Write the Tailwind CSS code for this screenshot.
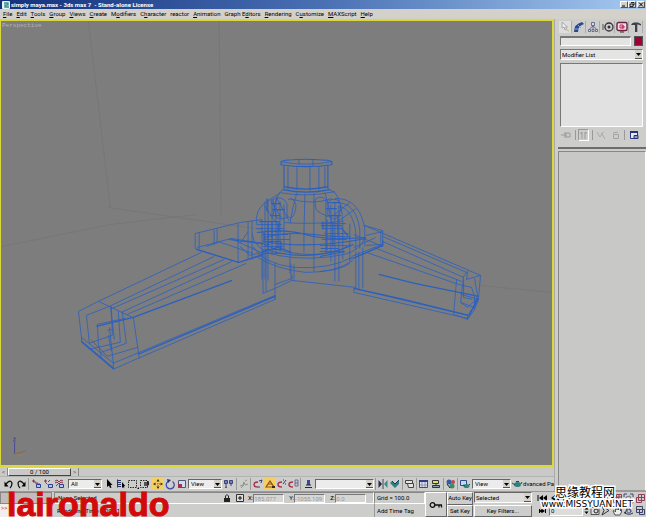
<!DOCTYPE html>
<html lang="en">
<head>
    <meta charset="UTF-8">
    <meta name="viewport" content="width=device-width, initial-scale=1.0">
    <title>simply maya.max - 3ds max 7 - Stand-alone License</title>
    <script src="https://cdn.jsdelivr.net/npm/@tailwindcss/browser@4"></script>
</head>
<body class="h-screen flex flex-col overflow-hidden bg-[#cdcdcb] text-black font-['Roboto','Liberation_Sans',sans-serif] text-[6px] leading-[8px]">

    <!-- Title bar -->
    <header class="h-[9px] shrink-0 flex items-center gap-px pl-[2px] pr-px bg-linear-to-r from-[#14307c] via-[#4a70b4] to-[#a6caf0] text-white">
        <svg class="size-2" viewBox="0 0 8 8"><rect width="8" height="8" rx="1" fill="#e8f4f4"/><path d="M2 2h4v2H3v2h4" fill="none" stroke="#2b8d94" stroke-width="1.3"/></svg>
        <h1 class="font-bold">simply maya.max - 3ds max 7 &nbsp;- Stand-alone License</h1>
        <div class="ml-auto flex text-black">
            <button aria-label="Minimize" class="w-2 h-[7px] bg-[#d4d0c8] border border-t-white border-l-white border-r-[#555] border-b-[#555]"><svg class="w-full h-full" viewBox="0 0 6 5"><path d="M1 4h3" stroke="#000"/></svg></button>
            <button aria-label="Restore" class="w-2 h-[7px] bg-[#d4d0c8] border border-t-white border-l-white border-r-[#555] border-b-[#555]"><svg class="w-full h-full" viewBox="0 0 6 5"><path d="M2 .5h3v2.500h-1M1 2h3v2.500h-3z" fill="none" stroke="#000" stroke-width=".8"/></svg></button>
            <button aria-label="Close" class="w-2 h-[7px] ml-px bg-[#d4d0c8] border border-t-white border-l-white border-r-[#555] border-b-[#555]"><svg class="w-full h-full" viewBox="0 0 6 5"><path d="M1 .5l4 4M5 .5l-4 4" stroke="#000"/></svg></button>
        </div>
    </header>

    <!-- Menu -->
    <nav class="h-[10px] shrink-0 flex items-center gap-1 pl-[3px] bg-[#d4d1cb]">
        <button><u>F</u>ile</button>
        <button><u>E</u>dit</button>
        <button><u>T</u>ools</button>
        <button><u>G</u>roup</button>
        <button><u>V</u>iews</button>
        <button><u>C</u>reate</button>
        <button>M<u>o</u>difiers</button>
        <button>C<u>h</u>aracter</button>
        <button>reactor</button>
        <button><u>A</u>nimation</button>
        <button>Graph E<u>d</u>itors</button>
        <button><u>R</u>endering</button>
        <button>C<u>u</u>stomize</button>
        <button><u>M</u>AXScript</button>
        <button><u>H</u>elp</button>
    </nav>

    <div class="flex-1 min-h-0 flex">
        <main class="flex-1 min-w-0 flex flex-col">

            <!-- Viewport -->
            <section class="relative flex-1 min-h-0 border-2 border-[#dcd83a] border-l-1 bg-[#7d7d7d]">
                <svg class="w-full h-full" viewBox="1 21 551 445" fill="none" stroke-width=".8">
                    <!-- ground grid -->
                    <g stroke="#757575">
                        <path d="M88 21L110 208M219 21L221 215M1 247L110 225L196 215M108 208L262 230M480 286L552 293"/>
                    </g>
                    <g stroke="#2a60c0">
                        <!-- neck -->
                        <path stroke-width="1.100" d="M281 162Q284 160 293 160Q306 159 319 160Q329 160 332 162V165Q306 169 281 165ZM284 187Q306 192 328 187M283 190Q306 195 330 190M284 166V189M328 166V189"/>
                        <path d="M281 162Q306 167 332 162M288 167V190M297 167V190M299 160V165M310 167V191M313 160V166M319 167V190M325 167V189M280 193Q306 198 335 192M284 189L280 193M328 189L335 193"/>
                        <!-- dome -->
                        <path d="M280 193C276 199 275 203 273 216M335 193C339 199 342 206 343 223M280 193C274 199 263 201 258 212Q255 218 257 226M335 199C350 198 362 208 365 230V247M337 203C349 203 358 212 360 231V249M338 207C347 207 354 217 356 233V250M297 193L293 208L290 224M305 194L304 233M314 194L314 232M325 193L329 208L332 224M290 199Q311 206 332 199M284 223Q310 225 343 222M270 200L282 219M276 197L289 221M264 206L277 224M350 203L333 216M356 209L338 222"/>
                        <path d="M273 200Q282 195 287 204V218Q281 221 276 218ZM288 200Q293 197 296 205Q296 214 291 219L287 216M315 200Q322 194 328 202V217Q320 214 316 210ZM329 201Q338 197 341 205Q342 214 335 220L328 216"/>
                        <!-- hub -->
                        <path stroke-width="1.200" d="M257 233Q285 229 305 235T366 238M263 242Q310 250 366 239M264 238Q286 232 314 235T350 237M265 250Q312 264 354 245M262 252L278 248L292 253M320 257L345 252M259 222H279V232H264V242H281V250H266"/>
                        <path d="M252 234Q254 251 278 256Q311 262 344 255Q361 251 365 238M253 247Q262 264 294 268Q330 270 352 258M258 258Q277 270 306 273Q336 273 353 261M264 245Q285 255 312 255T351 244M258 225H282M256 229H284M263 235H288M264 240H290M263 247H283M265 254H286M321 224H346M322 229H343M324 234H349M322 240H347M320 246H347M320 252H345"/>
                        <path d="M262 220V280M265 202V280M268 200V281M272 199V256M276 200V254M280 202V252M284 205V250M290 234V274M304 232V253M314 232V272M326 200V254M331 205V262M335 202V282M339 206V282M343 223V260M350 224V262M291 264V280M294 265V280"/>
                        <path stroke-width="1.200" d="M267 199V212M271 204H281M272 210H285M270 216H280M268 224V250M272 223V245M278 224V248M323 222V230M327 220V251M333 222V247M338 216V236M328 203H339M326 209H337M328 216H341M341 228L348 236M321 226H342M321 249H339"/>
                        <!-- plates -->
                        <path d="M195 234L240 223L262 220M195 234V249L238 263L263 256M199 233V250M214 230V245M217 229V244M238 224V263M248 222V260M252 221V260M197 248L231 239L264 244M206 247L218 243M218 242L253 254M231 239L263 254M248 232L240 244M240 247L250 256L265 252M364 226L383 231V246L350 260M381 232V244M366 246L382 245L352 257M354 235L383 247M366 236L383 232M354 248L376 238"/>
                        <path stroke-width="1.200" d="M196 250L239 263L265 254M353 259L383 246V241M229 240L270 245"/>
                        <!-- left arm -->
                        <path d="M78 312L98 302L201 253M86 316L109 307L214 257M112 309L224 260M121 313L232 262M127 315L246 264M78 312L81 338V343L113 370V364L81 338M86 316L89 344M110 307L114 340M98 302L132 318M111 307L112 336M118 312L120 343L89 350M97 325L98 345L101 358M97 325L125 319M109 328L113 364M108 336L111 352M122 313L126 344L101 353M91 341L107 357L138 348M133 318L139 359M113 370L138 359L275 300V296L113 364M89 344L112 336M107 331L113 330M263 250V294L275 289V263M266 252V292M275 289V300"/>
                        <path stroke-width="1.300" d="M96 327L133 318L232 281M81 342L113 369M138 355L275 297"/>
                        <!-- right arm -->
                        <path d="M365 226L481 276L479 298L468 320V316M383 237L467 273M383 242L464 278M374 248L462 282M367 253L459 285M468 272L467 280L481 276M468 272L464 277L461 303L468 308L479 298M464 280V298L473 300M475 279L478 296L474 308L461 303M459 285L472 288L475 297V310M457 280L454 315L468 320L475 310L479 300M461 295L476 299M354 289V293L468 319M354 289L468 316M356 252V290M359 252V291M363 248V289M292 275V281L356 288M292 279L275 285M292 281L275 289M350 264Q340 271 320 272"/>
                        <path stroke-width="1.300" d="M379 275L415 284L479 297M354 289L404 300L469 316M469 316L479 299"/>
                    </g>
                    <!-- axis tripod -->
                    <path d="M14 443V455" stroke="#3b3f9c"/><path d="M14 455L25 452" stroke="#9c5a3c"/><path d="M14 455L21 457L25 454" stroke="#8d8a4a"/><path d="M13 439H15L13 442H15" stroke="#3b3f9c"/>
                </svg>
                <span class="absolute left-px top-px font-['Liberation_Mono',monospace] text-[#b4b4b4]">Perspective</span>
            </section>

            <!-- Time slider -->
            <div class="h-[10px] shrink-0 flex items-center bg-[#c9c9c7] border-b border-[#b3b3b1]">
                <button aria-label="Previous frame" class="w-2 text-[#555] border-r border-[#888]">&lt;</button>
                <button class="w-[63px] h-[8px] leading-[6px] border border-t-white border-l-white border-r-[#444] border-b-[#444]">0 / 100</button>
                <button aria-label="Next frame" class="w-2 text-[#555] border-r border-[#888]">&gt;</button>
            </div>

            <!-- Main toolbar -->
            <div class="h-[14px] shrink-0 flex items-center pl-[3px] overflow-hidden whitespace-nowrap *:shrink-0">
                <button aria-label="Undo"><svg class="size-3" viewBox="0 0 12 12"><path d="M3 6Q7 1 9 5Q9 8 7 10" fill="none" stroke="#111" stroke-width="1.300"/><path d="M1.500 3.500v5h4z"/></svg></button>
                <button aria-label="Redo"><svg class="size-3" viewBox="0 0 12 12"><path d="M9 6Q5 1 3 5Q3 8 5 10" fill="none" stroke="#111" stroke-width="1.300"/><path d="M10.500 3.500v5h-4z"/></svg></button>
                <span class="w-px h-3 mx-px bg-[#999]"></span>
                <button aria-label="Link"><svg class="size-3" viewBox="0 0 12 12"><path d="M2 3h3v2h3M3.500 1.500v3M7 5v4h3V6H8" fill="none" stroke="#8a3550"/><path d="M6.500 6.500h4v3h-4z" fill="#b9c4ee" stroke="#2c3f94"/></svg></button>
                <button aria-label="Unlink"><svg class="size-3" viewBox="0 0 12 12"><path d="M2 3h3M3.500 1.500v3l2 2M8 2L6 4" fill="none" stroke="#8a3550"/><path d="M6.500 6.500h4v3h-4z" fill="#b9c4ee" stroke="#2c3f94"/></svg></button>
                <button aria-label="Bind to space warp"><svg class="size-3" viewBox="0 0 12 12"><path d="M1 3l2-1 2 2 2-2 2 1M1 5l2-1 2 2 2-2 2 1M2 8l2-2" fill="none" stroke="#8a3550"/><path d="M5.500 6.500h4v3h-4z" fill="#b9c4ee" stroke="#2c3f94"/></svg></button>
                <div class="relative w-[34px] ml-[2px]">
                    <select aria-label="Selection filter" class="appearance-none block w-full h-[10px] pl-[2px] bg-[#ececec] border border-[#666] border-r-white border-b-white"><option>All</option></select>
                    <svg class="absolute right-px top-px w-[7px] h-2 bg-[#d4d1cb] pointer-events-none" viewBox="0 0 7 8"><path d="M1 3h5l-2.500 3z"/><path d="M0 7.500h7" stroke="#555"/></svg>
                </div>
                <button aria-label="Select object" class="ml-px"><svg class="size-3" viewBox="0 0 12 12"><path d="M4 1v8l2-1.500 1 2.500 1.500-.5-1-2.500h2z"/></svg></button>
                <button aria-label="Select by name"><svg class="size-3" viewBox="0 0 12 12"><path d="M2 2.500h4M2 4.500h4M2 6.500h4M2 8.500h4M2.500 1.500v8" stroke="#2a3566"/><path d="M7 4v6l1.200-1 1 1.500V8h1z"/></svg></button>
                <button aria-label="Rectangular region"><svg class="size-3" viewBox="0 0 12 12"><path d="M1.500 2.500h8v7h-8z" fill="none" stroke="#222" stroke-dasharray="1.500 1"/><path d="M10 11h2V9z"/></svg></button>
                <button aria-label="Window crossing"><svg class="size-3" viewBox="0 0 12 12"><path d="M1.500 2.500h7v7h-7z" fill="none" stroke="#222" stroke-dasharray="1.500 1"/><path d="M5 4h3v4H5z" fill="#555"/><path d="M8 4l2-1v4l-2 1z" fill="#222"/></svg></button>
                <button aria-label="Move" class="ml-px bg-[#f6cf62]"><svg class="size-3" viewBox="0 0 12 12"><path d="M6 1l1.500 2.500h-3zM6 11l1.500-2.500h-3zM1 6l2.500-1.500v3zM11 6L8.500 4.500v3z" fill="#302a14"/><path d="M6 3v6M3 6h6" stroke="#8c7025" stroke-dasharray="1 1"/></svg></button>
                <button aria-label="Rotate"><svg class="size-3" viewBox="0 0 12 12"><path d="M4 3.500A4 4 0 1 0 8.500 3.500" fill="none" stroke="#3d4d9e" stroke-width="1.300"/><path d="M3 1l4 1-3 3z" fill="#26306e"/></svg></button>
                <button aria-label="Scale"><svg class="size-3" viewBox="0 0 12 12"><path d="M2.500 2.500h7v7h-7z" fill="#d7dae8" stroke="#50557c"/><path d="M2 6h4v4H2z" fill="#a52d50"/></svg></button>
                <div class="relative w-[34px]">
                    <select aria-label="Reference coordinate system" class="appearance-none block w-full h-[10px] pl-[2px] bg-[#ececec] border border-[#666] border-r-white border-b-white"><option>View</option></select>
                    <svg class="absolute right-px top-px w-[7px] h-2 bg-[#d4d1cb] pointer-events-none" viewBox="0 0 7 8"><path d="M1 3h5l-2.500 3z"/><path d="M0 7.500h7" stroke="#555"/></svg>
                </div>
                <button aria-label="Pivot center" class="ml-px"><svg class="size-3" viewBox="0 0 12 12"><path d="M1.500 2.500h3v3h-3zM6.500 2.500h3v3h-3z" fill="#7480c0" stroke="#38437e"/><path d="M3 5v5M8 5v3" stroke="#38437e"/><path d="M2 9.500h2" stroke="#b03050"/></svg></button>
                <span class="w-px h-3 mx-px bg-[#999]"></span>
                <button aria-label="Manipulate"><svg class="size-3" viewBox="0 0 12 12"><path d="M2 8l3-1 1-3 1 3 3-1M3 10l3-3M7 3l2-1" fill="none" stroke="#8b948b"/></svg></button>
                <span class="w-px h-3 mr-px bg-[#999]"></span>
                <button aria-label="Snaps toggle"><svg class="size-3" viewBox="0 0 12 12"><path d="M6 9Q2 9 2 6.500T6 4" fill="none" stroke="#a8344c" stroke-width="1.500"/><path d="M7 3l3-1-1 3M6 9h2" fill="none" stroke="#2e3a82"/></svg></button>
                <button aria-label="Angle snap" class="bg-[#f6cf62]"><svg class="size-3" viewBox="0 0 12 12"><path d="M2 9L6 3l4 6z" fill="none" stroke="#8c4a1a" stroke-width="1.200"/><path d="M4 6h4" stroke="#8c4a1a"/><path d="M8 8h3v2H8z" fill="#3a2b14"/></svg></button>
                <button aria-label="Percent snap"><svg class="size-3" viewBox="0 0 12 12"><path d="M6 9Q2 9 2 6.500T6 4" fill="none" stroke="#a8344c" stroke-width="1.500"/><path d="M10 2L7 6M7 2h1M9 6h1" stroke="#2e3a82"/></svg></button>
                <button aria-label="Spinner snap"><svg class="size-3" viewBox="0 0 12 12"><path d="M5 9Q1 9 1 6.500T5 4" fill="none" stroke="#a8344c" stroke-width="1.500"/><path d="M7 2h3v6H7zM7 5h3" fill="#c6c9dc" stroke="#55597a" stroke-width=".8"/></svg></button>
                <span class="w-px h-3 mr-px bg-[#999]"></span>
                <button aria-label="Edit named selections"><svg class="size-3" viewBox="0 0 12 12"><path d="M5 2h3v5H5z" fill="#3c4894"/><path d="M3 9.500h7M4 7h5" stroke="#1b2459"/></svg></button>
                <div class="relative w-[59px] ml-px">
                    <select aria-label="Named selection sets" class="appearance-none block w-full h-[10px] pl-[2px] bg-[#ececec] border border-[#666] border-r-white border-b-white"><option></option></select>
                    <svg class="absolute right-px top-px w-[7px] h-2 bg-[#d4d1cb] pointer-events-none" viewBox="0 0 7 8"><path d="M1 3h5l-2.500 3z"/><path d="M0 7.500h7" stroke="#555"/></svg>
                </div>
                <span class="w-px h-3 mx-px bg-[#999]"></span>
                <button aria-label="Mirror"><svg class="size-3" viewBox="0 0 12 12"><path d="M1.500 2v8l3.500-4z" fill="#1c2c4c"/><path d="M10.500 2v8L7 6z" fill="#3d8b90"/><path d="M6 1v10" stroke="#444"/></svg></button>
                <button aria-label="Align"><svg class="size-3" viewBox="0 0 12 12"><path d="M1 5l2-2 3 3 4-4v4L6 10z" fill="#2c7f86"/><path d="M3 3l3 3 4-4" fill="none" stroke="#183c50"/></svg></button>
                <span class="w-px h-3 mx-px bg-[#999]"></span>
                <button aria-label="Layer manager"><svg class="size-3" viewBox="0 0 12 12"><path d="M1.500 2.500h7v3h-7zM3.500 5.500h6v4h-5z" fill="#e4e4e4" stroke="#444"/></svg></button>
                <span class="w-px h-3 mr-px bg-[#999]"></span>
                <button aria-label="Curve editor"><svg class="size-3" viewBox="0 0 12 12"><path d="M1.500 2.500h8v7h-8z" fill="#dde" stroke="#444a70"/><path d="M1 3h9" stroke="#2d3a86" stroke-width="2"/><path d="M2 7h7M4 4v5M7 4v5" stroke="#777b9c" stroke-width=".7"/></svg></button>
                <button aria-label="Schematic view"><svg class="size-3" viewBox="0 0 12 12"><path d="M2.500 2.500h6v3h-6z" fill="#e3e05e" stroke="#333"/><path d="M2.500 7.500h7v2h-7z" fill="#7ba8a8" stroke="#333"/><path d="M6 6v2" stroke="#333"/></svg></button>
                <span class="w-px h-3 mx-px bg-[#999]"></span>
                <button aria-label="Material editor"><svg class="size-3" viewBox="0 0 12 12"><circle cx="4" cy="4" r="2.500" fill="#365aa4"/><circle cx="8" cy="4" r="2" fill="#be4451"/><circle cx="7" cy="8" r="2.500" fill="#3b8d68"/><path d="M2 6l3 4" stroke="#222"/></svg></button>
                <span class="w-px h-3 mr-px bg-[#999]"></span>
                <button aria-label="Render scene"><svg class="size-3" viewBox="0 0 12 12"><path d="M1.500 2.500h6v5h-6z" fill="#c8d4f0" stroke="#2d4b8f"/><ellipse cx="7.500" cy="8" rx="3" ry="2" fill="#2f8582"/><path d="M4 7l2 1M10 7l1-1" stroke="#1f4744"/></svg></button>
                <div class="relative w-[39px] ml-px">
                    <select aria-label="Render type" class="appearance-none block w-full h-[10px] pl-[2px] bg-[#ececec] border border-[#666] border-r-white border-b-white"><option>View</option></select>
                    <svg class="absolute right-px top-px w-[7px] h-2 bg-[#d4d1cb] pointer-events-none" viewBox="0 0 7 8"><path d="M1 3h5l-2.500 3z"/><path d="M0 7.500h7" stroke="#555"/></svg>
                </div>
                <button aria-label="Quick render"><svg class="size-3" viewBox="0 0 12 12"><ellipse cx="6.500" cy="6.500" rx="3.500" ry="2.500" fill="#2f7f7f"/><path d="M1 5l3 2M10 6l1-2M5 3.500h3" stroke="#1d4d50"/></svg></button>
                <span>dvanced Pa</span>
            </div>
        </main>

        <!-- Command panel -->
        <aside class="w-[92px] shrink-0 flex flex-col pl-[3px] border-l border-[#aaa]">
            <div class="flex justify-between h-[14px] pt-[2px] pl-px pr-[3px] *:border-r *:border-[#aaa]">
                <button aria-label="Create" class="bg-[#dededc]"><svg class="size-3" viewBox="0 0 12 12"><path d="M3 1v6l2-1 1 3 1.500-.5-1-2.500h2z" fill="#eee" stroke="#999" stroke-width=".8"/><path d="M8 9l2 1" stroke="#b8b46a"/></svg></button>
                <button aria-label="Modify"><svg class="size-3" viewBox="0 0 12 12"><path d="M1 11Q1 3 9 1l2 2Q5 5 5 11z" fill="#27498f"/><path d="M5 4l3 3M2 8h4" stroke="#8fa6d8"/></svg></button>
                <button aria-label="Hierarchy"><svg class="size-3" viewBox="0 0 12 12"><path d="M4.500 1.500h3v3h-3zM1.500 8.500h2v2h-2zM5 8.500h2v2H5zM8.500 8.500h2v2h-2z" fill="#d8dae8" stroke="#53587a" stroke-width=".8"/><path d="M6 5v3M2.500 8L6 5l3.500 3" fill="none" stroke="#53587a" stroke-width=".8"/></svg></button>
                <button aria-label="Motion"><svg class="size-3" viewBox="0 0 12 12"><circle cx="7" cy="6" r="4" fill="#ccc" stroke="#333" stroke-width="1.300"/><circle cx="7" cy="6" r="1.500" fill="#333"/><path d="M0 4h2M0 6h3M0 8h2" stroke="#555"/></svg></button>
                <button aria-label="Display"><svg class="size-3" viewBox="0 0 12 12"><rect x="1" y="1.500" width="10" height="8" rx="1.500" fill="#f0dfe5" stroke="#6b2145" stroke-width="1.400"/><path d="M4 4h3v3H4zM6 5h2v2H6z" fill="none" stroke="#c22c54"/><path d="M4 11h4" stroke="#333"/></svg></button>
                <button aria-label="Utilities"><svg class="size-3" viewBox="0 0 12 12"><path d="M1 4Q2 1 5 1.500H8L11 3V4.500L8 3.500H7.300V11H5V4H3z" fill="#3f4148"/></svg></button>
            </div>
            <div class="flex gap-[3px] pl-[2px] pr-[3px] mt-[3px]">
                <input type="text" aria-label="Object name" class="flex-1 min-w-0 h-[10px] bg-[#e4e4e4] border border-t-2 border-[#777] border-r-white border-b-white">
                <button aria-label="Object color" class="w-[9px] h-[10px] bg-[#9e0039] border border-[#555]"></button>
            </div>
            <div class="relative ml-[2px] mr-[3px] mt-[3px]">
                <select aria-label="Modifier List" class="appearance-none block w-full h-[11px] pl-px bg-[#e4e4e4] border border-[#777] border-r-white border-b-white"><option>Modifier List</option></select>
                <svg class="absolute right-px top-px w-[7px] h-[9px] bg-[#d4d1cb] pointer-events-none" viewBox="0 0 7 9"><path d="M1 3h5l-2.500 3z"/><path d="M0 8.500h7" stroke="#555"/></svg>
            </div>
            <div class="h-[64px] ml-[2px] mr-[3px] mt-[3px] bg-[#e1e1e1] border border-[#777] border-r-white border-b-white"></div>
            <div class="flex items-center justify-between h-[16px] pl-[2px] pr-[6px]">
                <button aria-label="Pin stack"><svg class="size-3" viewBox="0 0 12 12"><path d="M1 6h4M5 3v6M6 4h4v4H6z" fill="none" stroke="#999"/></svg></button>
                <span class="w-px h-[10px] bg-[#999]"></span>
                <button aria-label="Show end result" class="border border-[#999] border-r-white border-b-white"><svg class="w-[9px] h-[10px]" viewBox="0 0 9 10"><path d="M3 2v7M6 2v7M1 3h2M6 3h2" stroke="#999"/></svg></button>
                <span class="w-px h-[10px] bg-[#999]"></span>
                <button aria-label="Make unique"><svg class="size-3" viewBox="0 0 12 12"><path d="M2 3l3 5 2-3 3 5M6 5l3-2" fill="none" stroke="#aaa"/></svg></button>
                <button aria-label="Remove modifier"><svg class="size-3" viewBox="0 0 12 12"><path d="M3.500 5.500h5v4h-5zM3 4l5-1" fill="none" stroke="#a4a4a4"/></svg></button>
                <span class="w-px h-[10px] bg-[#999]"></span>
                <button aria-label="Configure modifier sets"><svg class="size-3" viewBox="0 0 12 12"><path d="M2.500 2.500h7v7h-7z" fill="#e8ebf8" stroke="#27337c"/><path d="M2 3h8" stroke="#27337c" stroke-width="2"/><path d="M6 6.500h4v3H6z" fill="#8e96c8" stroke="#27337c"/></svg></button>
            </div>
            <hr class="h-[2px] mt-[4px] border-0 bg-[#6d6d6d]">
            <div class="flex-1 mt-[2px] border border-[#888] border-b-[#999] border-r-white bg-[#c8c8c6]"></div>
        </aside>
    </div>

    <!-- Status bar -->
    <footer class="relative h-[26px] shrink-0 flex border-t border-[#999] whitespace-nowrap *:shrink-0">
        <div class="w-[52px] flex flex-col">
            <div class="h-[12px] bg-[#c4bcbc] border border-[#888]"></div>
            <div class="flex-1 pl-px bg-[#f2eeee] text-[#d22]">&gt;&gt;</div>
        </div>
        <div class="flex-1 min-w-0 flex flex-col ml-[2px] *:pl-[3px]">
            <div class="h-[12px] flex items-center border border-t-[#888] border-l-[#888] border-r-white border-b-white">
                <span class="w-[165px]">None Selected</span>
                <button aria-label="Selection lock"><svg class="w-2 h-[10px]" viewBox="0 0 8 10"><path d="M2.500 5V3Q4 0 5.500 3V5" fill="none" stroke="#222"/><path d="M1 5h6v4H1z" fill="#222"/></svg></button>
                <button aria-label="Absolute mode" class="ml-[5px]"><svg class="w-2 h-2" viewBox="0 0 8 8"><path d="M.5.500h7v7h-7z" fill="#ddd" stroke="#333"/><path d="M4 2v4M2 4h4" stroke="#111"/></svg></button>
                <label for="x" class="ml-[4px]">X:</label>
                <input id="x" value="185.077" class="w-[31px] h-[9px] mr-[5px] bg-[#d6d6d4] border border-[#777] border-r-white border-b-white text-[#999]">
                <label for="y">Y:</label>
                <input id="y" value="-1055.109" class="w-[31px] h-[9px] mr-[5px] bg-[#d6d6d4] border border-[#777] border-r-white border-b-white text-[#999]">
                <label for="z">Z:</label>
                <input id="z" value="0.0" class="w-[31px] h-[9px] bg-[#d6d6d4] border border-[#777] border-r-white border-b-white text-[#999]">
            </div>
            <div class="flex-1 flex items-center">Rendering Time 0:00:01</div>
        </div>
        <div class="w-[51px] flex flex-col *:pl-[2px]">
            <div class="h-[12px] flex items-center border border-[#888] border-r-white border-b-white">Grid = 100.0</div>
            <button class="flex-1 text-left border-l border-[#999]">Add Time Tag</button>
        </div>
        <button aria-label="Set keys" class="w-[22px] flex items-center justify-center border border-white border-r-[#666] border-b-[#666]">
            <svg class="w-[14px] h-[8px]" viewBox="0 0 14 8" fill="none" stroke="#111" stroke-width="1.300"><circle cx="3.500" cy="4" r="2.300"/><path d="M6 4h7M10 4v2.500M12.500 4v2.500"/></svg>
        </button>
        <div class="w-[26px] grid grid-rows-2">
            <button class="border border-white border-r-[#666] border-b-[#666]">Auto Key</button>
            <button class="border border-white border-r-[#666] border-b-[#666]">Set Key</button>
        </div>
        <div class="w-[58px] ml-px grid grid-rows-2">
            <div class="relative">
                <select aria-label="Key set" class="appearance-none block w-full h-[11px] pl-px bg-[#dcdcda] border border-[#666] border-r-white border-b-white"><option>Selected</option></select>
                <svg class="absolute right-px top-px w-[7px] h-[9px] bg-[#d4d1cb] pointer-events-none" viewBox="0 0 7 9"><path d="M1 3h5l-2.500 3z"/><path d="M0 8.500h7" stroke="#555"/></svg>
            </div>
            <button class="border border-white border-r-[#666] border-b-[#666]">Key Filters...</button>
        </div>
        <!-- playback -->
        <div class="w-[64px] ml-1 flex flex-col justify-around">
            <div class="flex justify-between">
                <button aria-label="Go to start"><svg class="w-3 h-[10px]" viewBox="0 0 12 10"><path d="M2 2v6" stroke="#000"/><path d="M7 2v6L3 5zM11 2v6L7 5z"/></svg></button>
                <button aria-label="Previous"><svg class="w-3 h-[10px]" viewBox="0 0 12 10"><path d="M6 2v6L2 5zM10 2v6L6 5z"/></svg></button>
                <button aria-label="Play"><svg class="w-3 h-[10px]" viewBox="0 0 12 10"><path d="M1.500 .5h9v9h-9z" fill="none" stroke="#333"/><path d="M4 2v6l5-3z"/></svg></button>
                <button aria-label="Next"><svg class="w-3 h-[10px]" viewBox="0 0 12 10"><path d="M2 2v6l4-3zM6 2v6l4-3z"/></svg></button>
                <button aria-label="Go to end"><svg class="w-3 h-[10px]" viewBox="0 0 12 10"><path d="M1 2v6l4-3zM5 2v6l4-3z"/><path d="M10 2v6" stroke="#000"/></svg></button>
            </div>
            <div class="flex justify-between items-center">
                <button aria-label="Key mode"><svg class="w-3 h-[10px]" viewBox="0 0 12 10"><path d="M3.500 3v4M9.500 3v4" stroke="#000"/><path d="M3 5l3-2v4zM9 5L6 3v4z"/></svg></button>
                <input aria-label="Current frame" value="0" class="w-[34px] h-[10px] pl-px bg-[#dcdcda] border border-[#777] border-r-white border-b-white">
                <svg class="w-[5px] h-[9px]" viewBox="0 0 5 9"><path d="M.5 3.500h4L2.500 1zM.5 5.500h4L2.500 8z"/></svg>
                <button aria-label="Time configuration"><svg class="w-[10px] h-[10px]" viewBox="0 0 10 10"><path d="M1 1.500h8v7H1z" fill="#ddd" stroke="#555"/><circle cx="6" cy="5" r="2" fill="none" stroke="#222"/></svg></button>
            </div>
        </div>
        <!-- viewport navigation -->
        <div class="w-[46px] grid grid-cols-4 grid-rows-2 items-center">
            <button aria-label="Zoom"><svg class="size-[11px]" viewBox="0 0 11 11" fill="none" stroke="#444"><circle cx="5" cy="4" r="3"/><path d="M7 6l3 4"/></svg></button>
            <button aria-label="Zoom all"><svg class="size-[11px]" viewBox="0 0 11 11" fill="none" stroke="#8f4056"><path d="M4.500 1.500h5v5h-5zM1.500 4.500h5v5h-5zM4 4h6M7 1v5"/></svg></button>
            <button aria-label="Zoom extents"><svg class="size-[11px]" viewBox="0 0 11 11" fill="none" stroke="#3d477d"><path d="M1 4V1h3M7 1h3v3M10 7v3H7M4 10H1V7"/><path d="M3 4l4-1 1 4-4 1z" stroke="#777"/></svg></button>
            <button aria-label="Zoom extents all"><svg class="size-[11px]" viewBox="0 0 11 11" fill="none" stroke="#8f4056"><path d="M3.500 1.500h6v6h-6zM1.500 4.500h5v5h-5zM6.500 1v6M3 4.500h7"/></svg></button>
            <button aria-label="Field of view"><svg class="size-[11px]" viewBox="0 0 11 11" fill="none" stroke="#333"><path d="M2 1l7 4.500L2 10l2-4.500z"/></svg></button>
            <button aria-label="Pan"><svg class="size-[11px]" viewBox="0 0 11 11" fill="#eee" stroke="#333" stroke-width=".8"><path d="M3 10L1 6l1-.5 1.500 1.500V2H5v3V1h1.500v4L7 2h1.500v4l1-1.500V7L8 10z"/></svg></button>
            <button aria-label="Arc rotate"><svg class="size-[11px]" viewBox="0 0 11 11" fill="none" stroke="#333"><path d="M2 9L5 1l3 6M1 7q4 4 9 1"/><circle cx="6" cy="6" r="2" stroke="#4a5aa0"/></svg></button>
            <button aria-label="Maximize viewport"><svg class="size-[11px]" viewBox="0 0 11 11" fill="none" stroke="#3d4268"><path d="M1.500 1.500h6v6h-6zM4.500 4.500h5v5h-5zM1.500 4.500h6"/></svg></button>
        </div>

        <!-- watermarks -->
        <div class="absolute left-[7px] bottom-0 font-['Liberation_Sans',sans-serif] font-bold text-[34px] leading-[26px] text-[#d20a0a] [-webkit-text-stroke:1px_#d20a0a] pointer-events-none">laironaldo</div>
        <div class="absolute right-[13px] bottom-[8px] text-right text-black pointer-events-none [-webkit-text-stroke:3px_white] [paint-order:stroke_fill]">
            <div class="mr-[18px] text-[12px] leading-[15px] font-['Noto_Sans_CJK_SC',sans-serif]">思缘教程网</div>
            <div class="text-[9px] leading-[10px] font-['DejaVu_Sans',sans-serif]">www.MISSYUAN.NET</div>
        </div>
    </footer>

</body>
</html>
